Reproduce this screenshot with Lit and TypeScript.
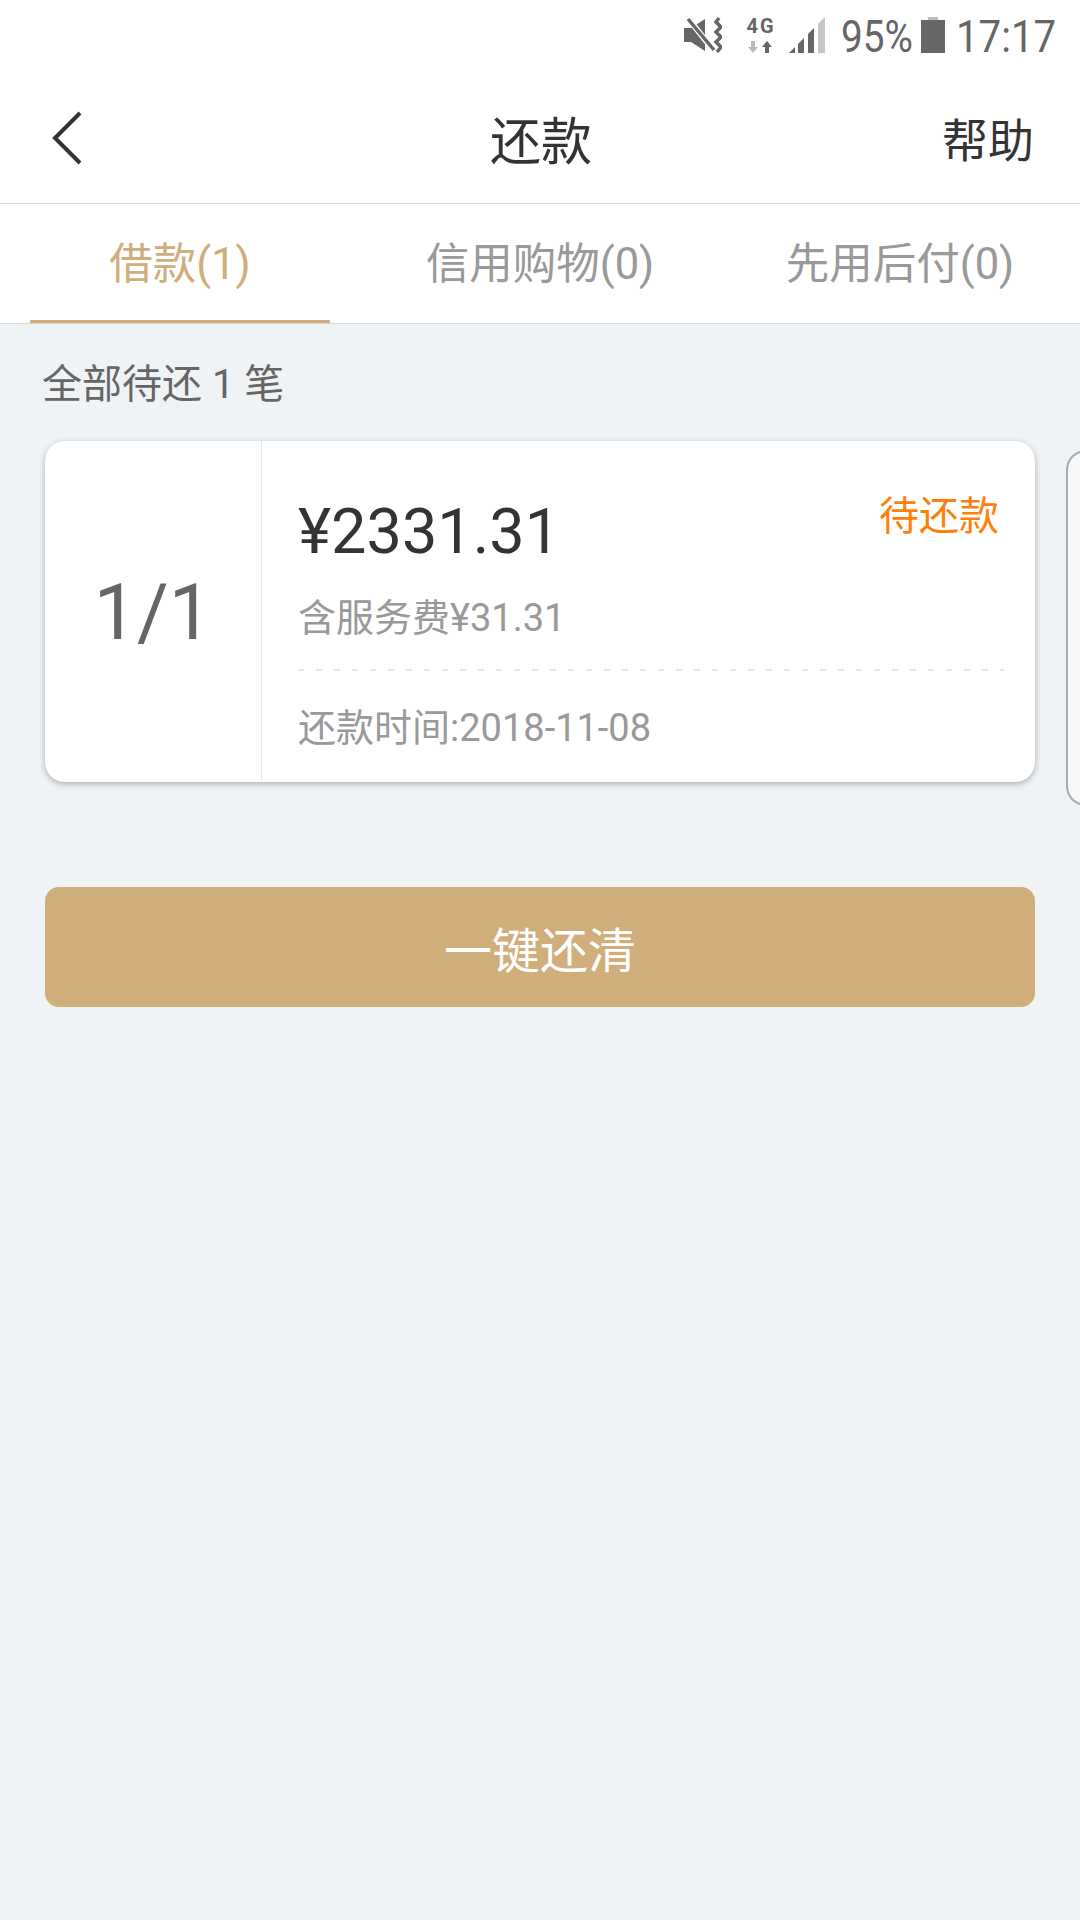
import { LitElement, html, css } from "lit";
import { customElement } from "lit/decorators.js";

@customElement("app-root")
export class AppRoot extends LitElement {
  static styles = css`
    :host {
      display: block;
      width: 1080px;
      height: 1920px;
      overflow: hidden;
      background: #eff3f6;
      font-family: Roboto, "Noto Sans CJK SC", sans-serif;
    }
    .status {
      height: 70px;
      background: #fff;
      display: flex;
      align-items: center;
      justify-content: flex-end;
      padding-right: 25px;
      color: #666;
      box-sizing: border-box;
    }
    .status svg { display: block; flex: none; }
    .mute { margin-right: 25px; }
    .net {
      width: 28px;
      margin-right: 14px;
      display: flex;
      flex-direction: column;
      align-items: center;
    }
    .net-label {
      font-size: 20px;
      line-height: 16px;
      font-weight: 700;
      letter-spacing: 2px;
      white-space: nowrap;
      color: #666;
    }
    .net svg { margin-top: 7px; }
    .signal { margin-right: 16px; }
    .pct, .time {
      font-size: 45px;
      line-height: 70px;
      padding-top: 4px;
      transform-origin: left center;
      white-space: nowrap;
    }
    .pct { width: 80px; transform: scaleX(0.86); }
    .time { width: 99px; transform: scaleX(0.894); margin-left: 11px; }
    .nav {
      height: 133px;
      background: #fff;
      border-bottom: 1px solid #d9d9d9;
      display: flex;
      align-items: center;
      padding: 0 46px 0 52px;
      color: #333;
    }
    .back { flex: none; width: 438px; }
    .back svg { display: block; }
    .title {
      flex: 1;
      font-size: 51px;
      padding-top: 2px;
    }
    .help { font-size: 46px; }
    .tabs {
      height: 119px;
      background: #fff;
      border-bottom: 1px solid #d5d9dd;
      display: grid;
      grid-template-columns: repeat(3, 360px);
    }
    .tab {
      display: flex;
      justify-content: center;
      align-items: center;
      font-size: 43.5px;
      color: #999;
      padding-bottom: 6px;
      box-sizing: border-box;
      position: relative;
    }
    .tab.on { color: #d0ae7b; }
    .tab.on::after {
      content: "";
      position: absolute;
      left: 30px;
      right: 30px;
      bottom: 0;
      height: 3px;
      background: #d0ae7b;
    }
    .summary {
      font-size: 40px;
      line-height: 46px;
      color: #666;
      padding: 38px 0 0 42px;
    }
    .cards {
      display: flex;
      align-items: flex-start;
      padding: 33px 0 0 45px;
      gap: 31px;
      overflow: hidden;
    }
    .card {
      flex: none;
      width: 990px;
      height: 341px;
      background: #fff;
      border-radius: 20px;
      box-shadow: 0 2px 6px rgba(0, 0, 0, 0.28);
      display: flex;
    }
    .index {
      flex: none;
      width: 217px;
      border-right: 1px solid #e6e6e6;
      display: flex;
      align-items: center;
      justify-content: center;
      font-size: 77px;
      color: #666;
      padding-top: 3px;
      box-sizing: border-box;
    }
    .detail {
      flex: 1;
      padding: 0 31px 0 36px;
    }
    .top {
      display: flex;
      justify-content: space-between;
    }
    .amount {
      font-size: 63px;
      line-height: 75px;
      color: #333;
      padding-top: 53px;
    }
    .state {
      font-size: 40px;
      line-height: 46px;
      color: #ff8008;
      padding: 53px 5px 0 0;
    }
    .sub, .when {
      font-size: 38px;
      line-height: 44px;
      color: #999;
    }
    .sub { padding-top: 27px; }
    .dash {
      height: 2px;
      margin-top: 29px;
      background: repeating-linear-gradient(90deg, #e5e5e5 0 6px, transparent 6px 18px);
    }
    .when { padding-top: 35px; }
    .peek {
      flex: none;
      width: 200px;
      height: 356px;
      margin-top: 9px;
      background: #f7f8fa;
      border: 2px solid #aaa;
      border-radius: 20px;
      box-sizing: border-box;
    }
    .pay {
      margin: 81px 45px 0;
      height: 120px;
      background: #d0ae7b;
      border-radius: 14px;
      display: flex;
      align-items: center;
      justify-content: center;
      font-size: 48px;
      color: #fff;
    }
  `;

  render() {
    return html`
      <div class="status">
        <svg class="mute" width="38" height="36" viewBox="0 0 38 36">
          <path d="M0 11h7L21 2v32L7 25H0z" fill="#666" />
          <path d="M3 0l27 34" stroke="#fff" stroke-width="6" />
          <path d="M4 2l26 31" stroke="#666" stroke-width="3.5" />
          <path d="M35 1l-3 4 5 5-5 5 5 5-5 5 5 5-4 5" fill="none" stroke="#666" stroke-width="3.5" />
        </svg>
        <div class="net">
          <span class="net-label">4G</span>
          <svg width="26" height="12" viewBox="0 0 26 12">
            <path d="M3 0h4v6h3l-5 6-5-6h3z" fill="#bbb" />
            <path d="M19 0l5 6h-3v6h-4V6h-3z" fill="#666" />
          </svg>
        </div>
        <svg class="signal" width="36" height="36" viewBox="0 0 36 36">
          <path d="M0 36l6-6v6z" fill="#666" />
          <path d="M9 27l6-6v15H9z" fill="#666" />
          <path d="M19 17l6-6v25h-6z" fill="#666" />
          <path d="M29 7l7-7v36h-7z" fill="#c6c6c6" />
        </svg>
        <span class="pct">95%</span>
        <svg width="24" height="36" viewBox="0 0 24 36">
          <path d="M7 0h10v3H7z" fill="#bbb" />
          <path d="M0 3h24v33H0z" fill="#666" />
        </svg>
        <span class="time">17:17</span>
      </div>

      <div class="nav">
        <div class="back">
          <svg width="31" height="56" viewBox="0 0 31 56">
            <path d="M28 4L3 29l25 25" fill="none" stroke="#333" stroke-width="4" />
          </svg>
        </div>
        <div class="title">还款</div>
        <div class="help">帮助</div>
      </div>

      <div class="tabs">
        <div class="tab on">借款(1)</div>
        <div class="tab">信用购物(0)</div>
        <div class="tab">先用后付(0)</div>
      </div>

      <div class="summary">全部待还 1 笔</div>

      <div class="cards">
        <div class="card">
          <div class="index">1/1</div>
          <div class="detail">
            <div class="top">
              <div class="amount">¥2331.31</div>
              <div class="state">待还款</div>
            </div>
            <div class="sub">含服务费¥31.31</div>
            <div class="dash"></div>
            <div class="when">还款时间:2018-11-08</div>
          </div>
        </div>
        <div class="peek"></div>
      </div>

      <div class="pay">一键还清</div>
    `;
  }
}
